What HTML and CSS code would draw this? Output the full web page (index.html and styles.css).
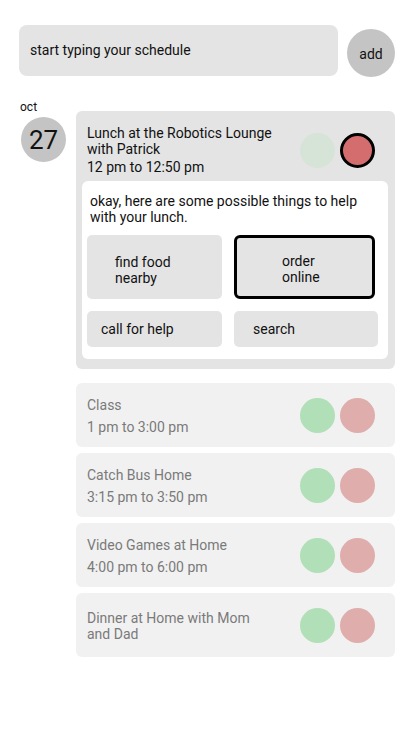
FILE: index.html
```html
<!DOCTYPE html>
<html>
<head>
<meta charset="utf-8">
<link rel="stylesheet" href="styles.css">
</head>
<body>
<div class="app">
  <div class="top">
    <div class="input">start typing your schedule</div>
    <div class="add">add</div>
  </div>
  <div class="day">
    <div class="date">
      <div class="month">oct</div>
      <div class="daynum">27</div>
    </div>
    <div class="events">
      <div class="card active">
        <div class="head">
          <div class="info">
            <div class="title">Lunch at the Robotics Lounge<br>with Patrick</div>
            <div class="time">12 pm to 12:50 pm</div>
          </div>
          <div class="dots">
            <span class="dot yes faded"></span>
            <span class="dot no selected"></span>
          </div>
        </div>
        <div class="helper">
          <div class="msg">okay, here are some possible things to help<br>with your lunch.</div>
          <div class="actions">
            <div class="act find">find food<br>nearby</div>
            <div class="act order">order<br>online</div>
            <div class="act call">call for help</div>
            <div class="act search">search</div>
          </div>
        </div>
      </div>
      <div class="card item">
        <div class="info">
          <div class="title">Class</div>
          <div class="time">1 pm to 3:00 pm</div>
        </div>
        <div class="dots"><span class="dot yes"></span><span class="dot no"></span></div>
      </div>
      <div class="card item">
        <div class="info">
          <div class="title">Catch Bus Home</div>
          <div class="time">3:15 pm to 3:50 pm</div>
        </div>
        <div class="dots"><span class="dot yes"></span><span class="dot no"></span></div>
      </div>
      <div class="card item">
        <div class="info">
          <div class="title">Video Games at Home</div>
          <div class="time">4:00 pm to 6:00 pm</div>
        </div>
        <div class="dots"><span class="dot yes"></span><span class="dot no"></span></div>
      </div>
      <div class="card item">
        <div class="info">
          <div class="title">Dinner at Home with Mom and Dad</div>
        </div>
        <div class="dots"><span class="dot yes"></span><span class="dot no"></span></div>
      </div>
    </div>
  </div>
</div>
</body>
</html>
```
FILE: styles.css
```css
* { box-sizing: border-box; }
html, body { margin: 0; padding: 0; background: #fff; }
body {
  font-family: Roboto, "Liberation Sans", sans-serif;
  font-size: 14px;
  line-height: 16px;
  color: #111;
  width: 414px;
}
.top {
  display: flex;
  align-items: flex-start;
  padding: 25px 0 0 19px;
}
.input {
  width: 319px;
  height: 51px;
  background: #e4e4e4;
  border-radius: 8px;
  display: flex;
  align-items: center;
  padding-left: 11px;
  padding-bottom: 1px;
}
.add {
  width: 48px;
  height: 48px;
  margin: 4px 0 0 9px;
  border-radius: 50%;
  background: #c4c4c4;
  display: flex;
  align-items: center;
  justify-content: center;
  padding-top: 2px;
}
.day {
  display: flex;
  padding: 23px 0 0 20px;
}
.date {
  width: 56px;
  flex: none;
}
.month {
  font-size: 12px;
  line-height: 14px;
}
.daynum {
  width: 45px;
  height: 45px;
  margin: 3px 0 0 1px;
  border-radius: 50%;
  background: #c4c4c4;
  display: flex;
  align-items: center;
  justify-content: center;
  font-size: 26px;
}
.events {
  margin-top: 11px;
  width: 319px;
  display: flex;
  flex-direction: column;
  gap: 6px;
}
.card {
  border-radius: 6px;
}
.active {
  background: #e4e4e4;
  padding: 14px 7px 10px 6px;
  margin-bottom: 8px;
}
.head {
  display: flex;
  align-items: center;
  justify-content: space-between;
  padding: 0 13px 0 5px;
}
.time { margin-top: 2px; }
.dots {
  display: flex;
  gap: 5px;
}
.dot {
  width: 35px;
  height: 35px;
  border-radius: 50%;
  display: block;
}
.dot.yes { background: #b1dfb7; }
.dot.no { background: #e0adad; }
.dot.yes.faded { background: #d6e4d7; }
.dot.no.selected { background: #d46d6d; border: 3px solid #000; }
.helper {
  margin-top: 6px;
  background: #fff;
  border-radius: 6px;
  padding: 12px 10px 12px 5px;
}
.msg { padding-left: 3px; }
.actions {
  margin-top: 10px;
  display: grid;
  grid-template-columns: 135px 144px;
  grid-template-rows: 64px 36px;
  column-gap: 12px;
  row-gap: 12px;
}
.act {
  background: #e4e4e4;
  border-radius: 5px;
  display: flex;
  align-items: center;
}
.find { padding: 6px 0 0 28px; }
.order {
  width: 141px;
  border: 3px solid #000;
  border-radius: 6px;
  padding: 3px 0 0 45px;
}
.call { padding-left: 14px; }
.search { padding-left: 19px; }
.item {
  background: #f1f1f1;
  height: 64px;
  display: flex;
  align-items: center;
  justify-content: space-between;
  padding: 0 20px 0 11px;
  color: #7a7a7a;
}
.item .info { width: 172px; padding-top: 2px; }
.item .time { margin-top: 6px; }
```
